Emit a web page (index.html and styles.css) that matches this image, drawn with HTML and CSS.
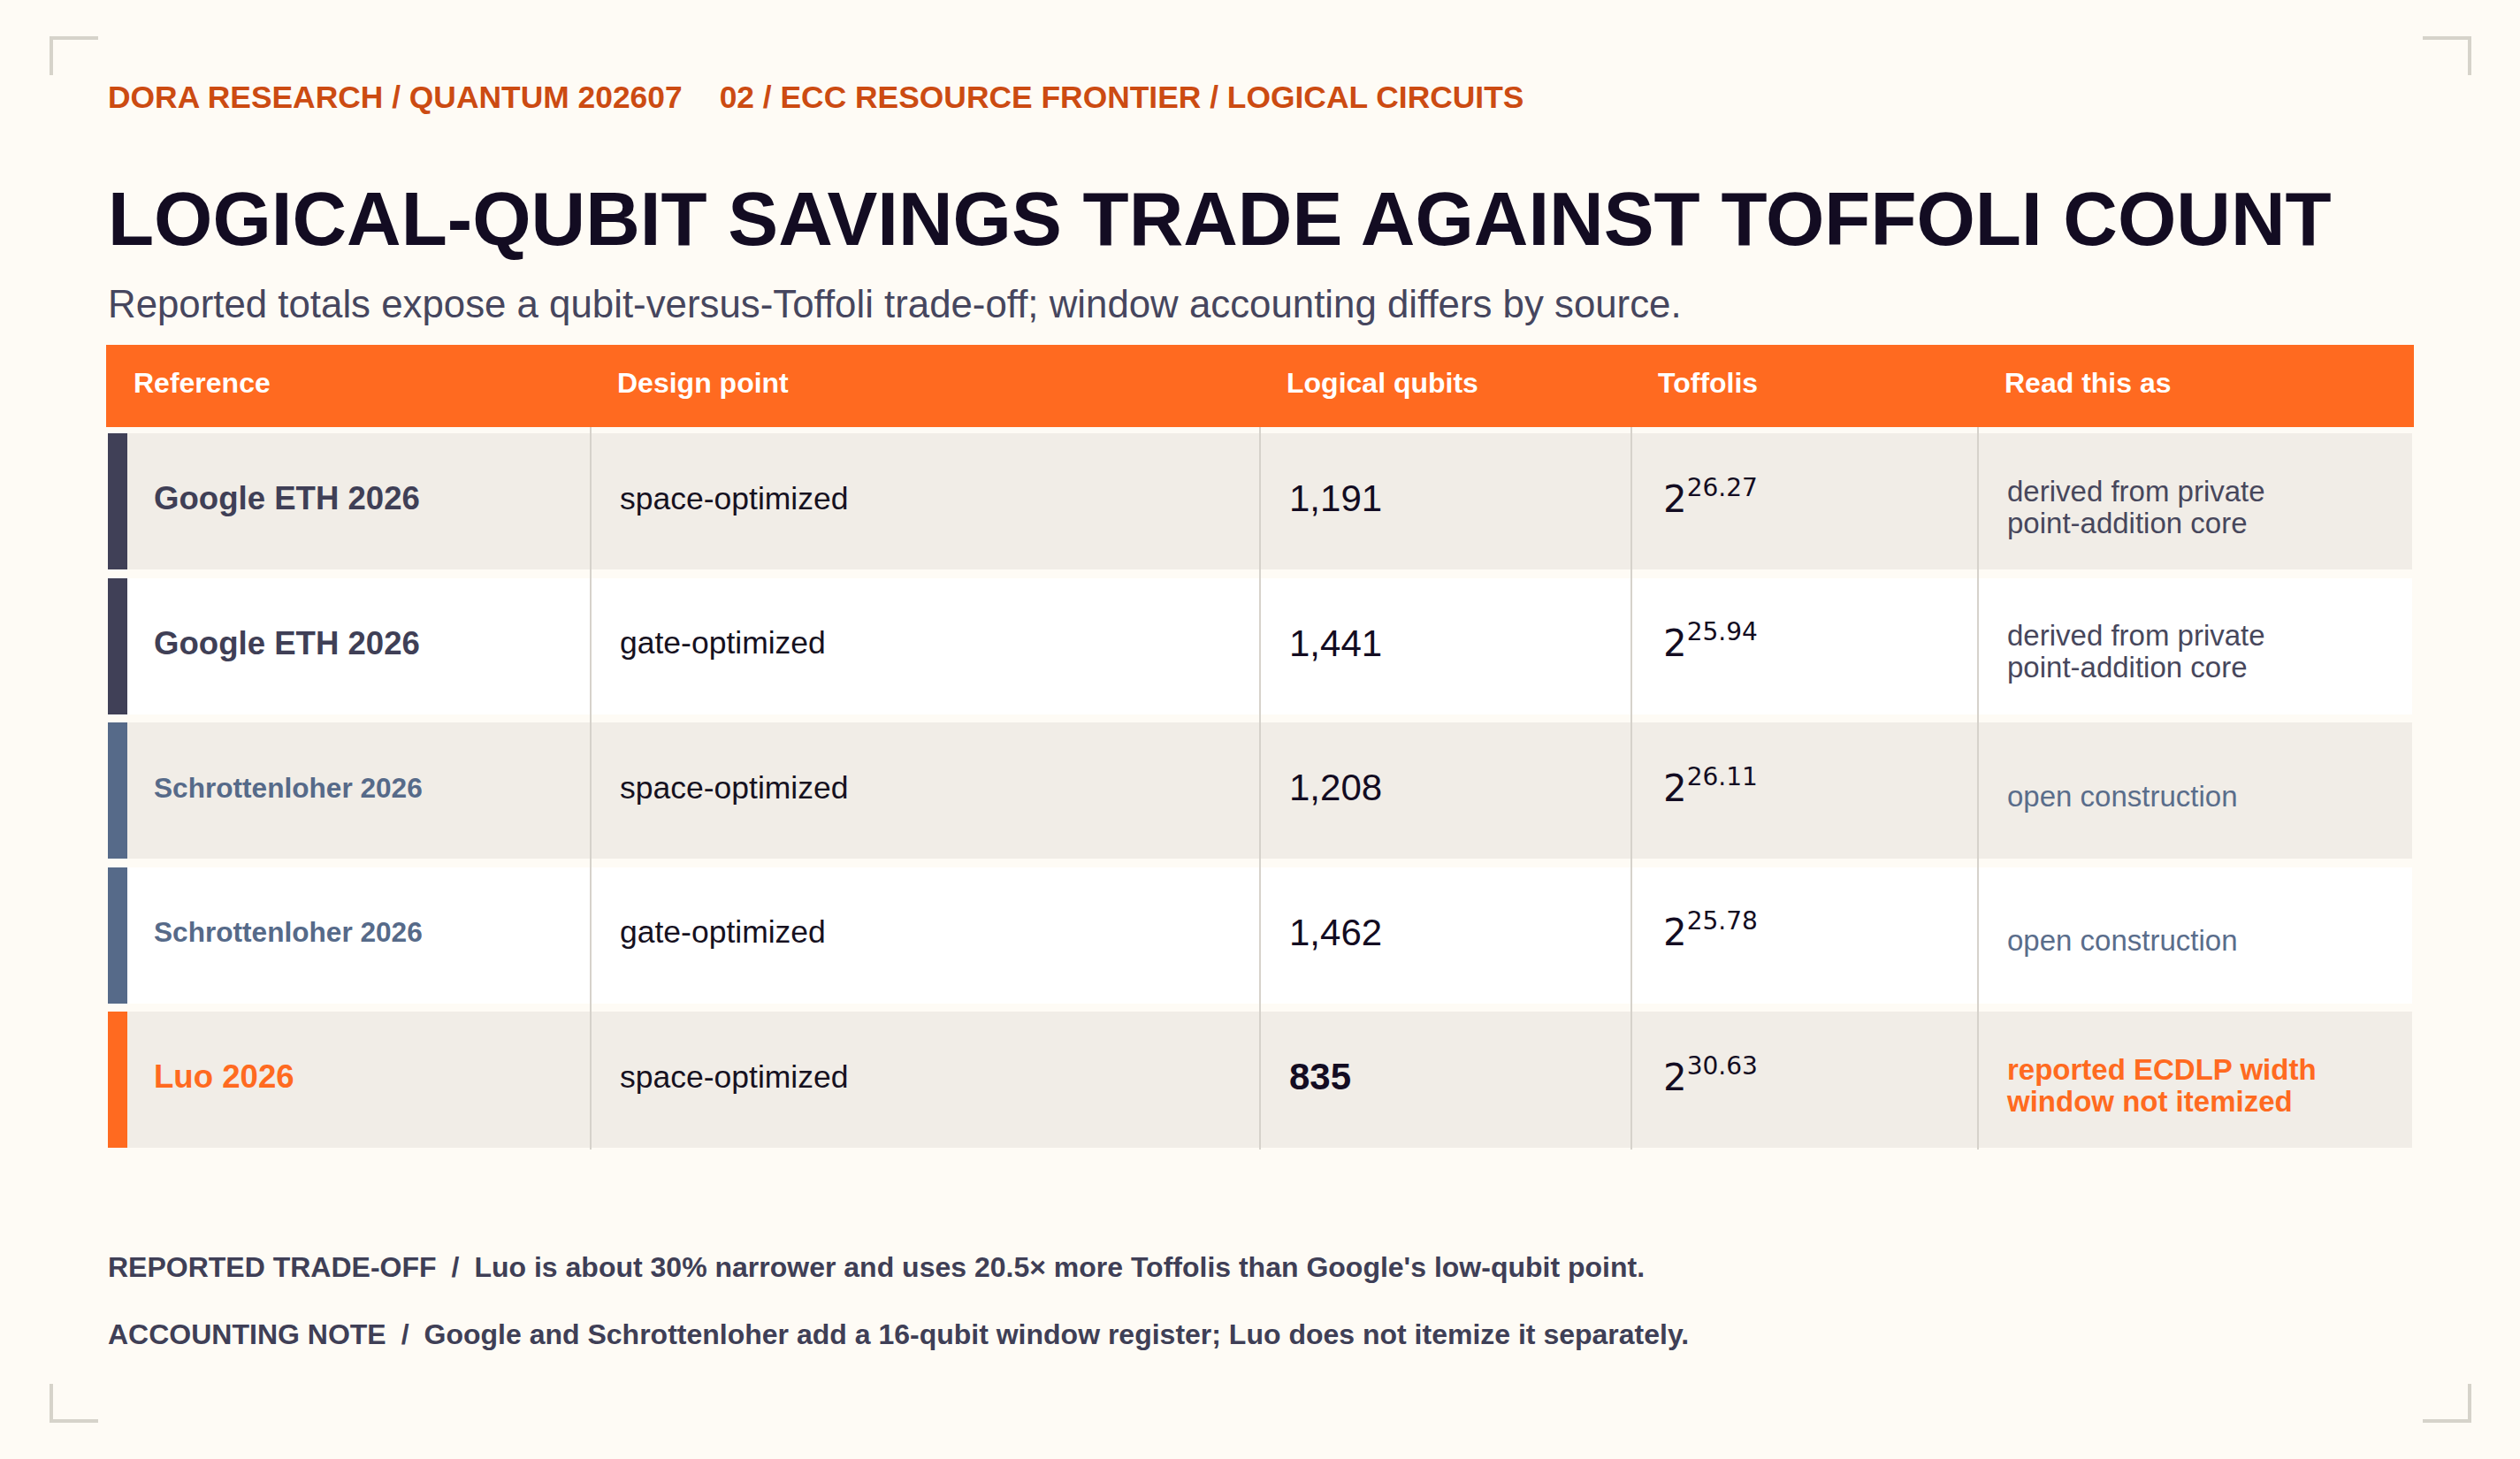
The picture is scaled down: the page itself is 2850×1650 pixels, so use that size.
FILE: index.html
```html
<!DOCTYPE html>
<html lang="en">
<head>
<meta charset="utf-8">
<title>Logical-qubit savings trade against Toffoli count</title>
<link rel="stylesheet" href="styles.css">
</head>
<body>
<div class="page">
  <span class="corner tl"></span>
  <span class="corner tr"></span>
  <span class="corner bl"></span>
  <span class="corner br"></span>

  <div class="kicker">
    <span>DORA RESEARCH / QUANTUM 202607</span>
    <span>02 / ECC RESOURCE FRONTIER / LOGICAL CIRCUITS</span>
  </div>
  <h1 class="title">LOGICAL-QUBIT SAVINGS TRADE AGAINST TOFFOLI COUNT</h1>
  <p class="subtitle">Reported totals expose a qubit-versus-Toffoli trade-off; window accounting differs by source.</p>

  <div class="table">
    <div class="thead">
      <div class="th first">Reference</div>
      <div class="th">Design point</div>
      <div class="th">Logical qubits</div>
      <div class="th">Toffolis</div>
      <div class="th">Read this as</div>
    </div>
    <div class="tbody">
      <div class="row alt google">
        <div class="cell name">Google ETH 2026</div>
        <div class="cell design">space-optimized</div>
        <div class="cell num">1,191</div>
        <div class="cell tof"><span>2<sup>26.27</sup></span></div>
        <div class="cell note"><span>derived from private<br>point-addition core</span></div>
      </div>
      <div class="row google">
        <div class="cell name">Google ETH 2026</div>
        <div class="cell design">gate-optimized</div>
        <div class="cell num">1,441</div>
        <div class="cell tof"><span>2<sup>25.94</sup></span></div>
        <div class="cell note"><span>derived from private<br>point-addition core</span></div>
      </div>
      <div class="row alt schrott">
        <div class="cell name">Schrottenloher 2026</div>
        <div class="cell design">space-optimized</div>
        <div class="cell num">1,208</div>
        <div class="cell tof"><span>2<sup>26.11</sup></span></div>
        <div class="cell note"><span>open construction</span></div>
      </div>
      <div class="row schrott">
        <div class="cell name">Schrottenloher 2026</div>
        <div class="cell design">gate-optimized</div>
        <div class="cell num">1,462</div>
        <div class="cell tof"><span>2<sup>25.78</sup></span></div>
        <div class="cell note"><span>open construction</span></div>
      </div>
      <div class="row alt luo">
        <div class="cell name">Luo 2026</div>
        <div class="cell design">space-optimized</div>
        <div class="cell num strong">835</div>
        <div class="cell tof"><span>2<sup>30.63</sup></span></div>
        <div class="cell note"><span>reported ECDLP width<br>window not itemized</span></div>
      </div>
    </div>
  </div>

  <div class="notes">
    <p class="footnote"><span>REPORTED TRADE-OFF</span><span class="sep">/</span>Luo is about 30% narrower and uses 20.5× more Toffolis than Google's low-qubit point.</p>
    <p class="footnote"><span>ACCOUNTING NOTE</span><span class="sep">/</span>Google and Schrottenloher add a 16-qubit window register; Luo does not itemize it separately.</p>
  </div>
</div>
</body>
</html>
```

FILE: styles.css
```css
html, body {
  margin: 0;
  padding: 0;
  background: #fefbf5;
}

body {
  font-family: "Liberation Sans", Arial, sans-serif;
  color: #130c22;
}

.page {
  position: relative;
  box-sizing: border-box;
  width: 2850px;
  height: 1650px;
  padding: 90px 120px 0 120px;
  overflow: hidden;
}

/* corner crop marks */
.corner {
  position: absolute;
  width: 55px;
  height: 44px;
  box-sizing: border-box;
  border: 0 solid #d6d3ca;
}
.corner.tl { left: 56px; top: 41px; border-top-width: 4px; border-left-width: 4px; }
.corner.tr { right: 55px; top: 41px; border-top-width: 4px; border-right-width: 4px; }
.corner.bl { left: 56px; bottom: 41px; border-bottom-width: 4px; border-left-width: 4px; }
.corner.br { right: 55px; bottom: 41px; border-bottom-width: 4px; border-right-width: 4px; }

.kicker {
  display: flex;
  gap: 42px;
  padding-left: 2px;
  font-size: 35.4px;
  line-height: 40px;
  font-weight: 700;
  color: #cc4b12;
}

.title {
  margin: 75px 0 0 0;
  padding-left: 2px;
  font-size: 85.3px;
  line-height: 85px;
  font-weight: 700;
  color: #130c22;
}

.subtitle {
  margin: 28px 0 0 0;
  padding-left: 2px;
  font-size: 43.8px;
  line-height: 52px;
  color: #46465e;
}

.table {
  margin-top: 20px;
  width: 2610px;
}

.thead {
  display: grid;
  grid-template-columns: 547px 757px 420px 392px 494px;
  height: 93px;
  background: #ff6a20;
}

.th {
  display: flex;
  align-items: center;
  padding: 0 0 6px 31px;
  font-size: 32px;
  font-weight: 700;
  color: #ffffff;
}
.th.first {
  padding-left: 31px;
}

.tbody {
  display: flex;
  flex-direction: column;
  gap: 9.5px;
  padding: 7px 0 2px 0;
  background-color: #fefbf5;
  background-image:
    linear-gradient(#d6d2cb, #d6d2cb),
    linear-gradient(#d6d2cb, #d6d2cb),
    linear-gradient(#d6d2cb, #d6d2cb),
    linear-gradient(#d6d2cb, #d6d2cb);
  background-size: 2px 100%;
  background-repeat: no-repeat;
  background-position: 547px 0, 1304px 0, 1724px 0, 2116px 0;
}

.row {
  display: grid;
  grid-template-columns: 545px 757px 420px 392px 492px;
  height: 154px;
  margin: 0 2px;
  background: #ffffff;
}
.row.alt {
  background: #f1ede7;
}

.cell {
  display: flex;
  align-items: center;
  padding: 0 0 6px 32px;
  border-left: 2px solid #d6d2cb;
}

.cell.name {
  padding-left: 30px;
  border-left: 22px solid #404057;
  font-size: 36.6px;
  font-weight: 700;
  color: #3f3f56;
}
.schrott .cell.name {
  border-left-color: #566a89;
  font-size: 31.6px;
  color: #566a89;
}
.luo .cell.name {
  border-left-color: #ff6a20;
  color: #ff6a20;
}

.cell.design {
  font-size: 35.5px;
  color: #16111f;
}

.cell.num {
  font-size: 42px;
  color: #130c22;
}
.cell.num.strong {
  font-weight: 700;
}

.cell.tof {
  padding-left: 35px;
  font-family: "DejaVu Sans", sans-serif;
  font-size: 42px;
  color: #130c22;
}
.cell.tof sup {
  font-size: 28px;
  line-height: 0;
  vertical-align: 18px;
}

.cell.note {
  padding-top: 13px;
  padding-bottom: 0;
  font-size: 33px;
  line-height: 36px;
  color: #47475c;
}
.schrott .cell.note {
  color: #5a6d8b;
}
.luo .cell.note {
  font-weight: 700;
  color: #ff6a20;
}

.notes {
  margin-top: 114px;
  padding-left: 2px;
  display: flex;
  flex-direction: column;
  gap: 38px;
}

.footnote {
  margin: 0;
  font-size: 32px;
  line-height: 38px;
  font-weight: 700;
  color: #3f3f56;
}
.footnote .sep {
  margin: 0 17px;
}
```
